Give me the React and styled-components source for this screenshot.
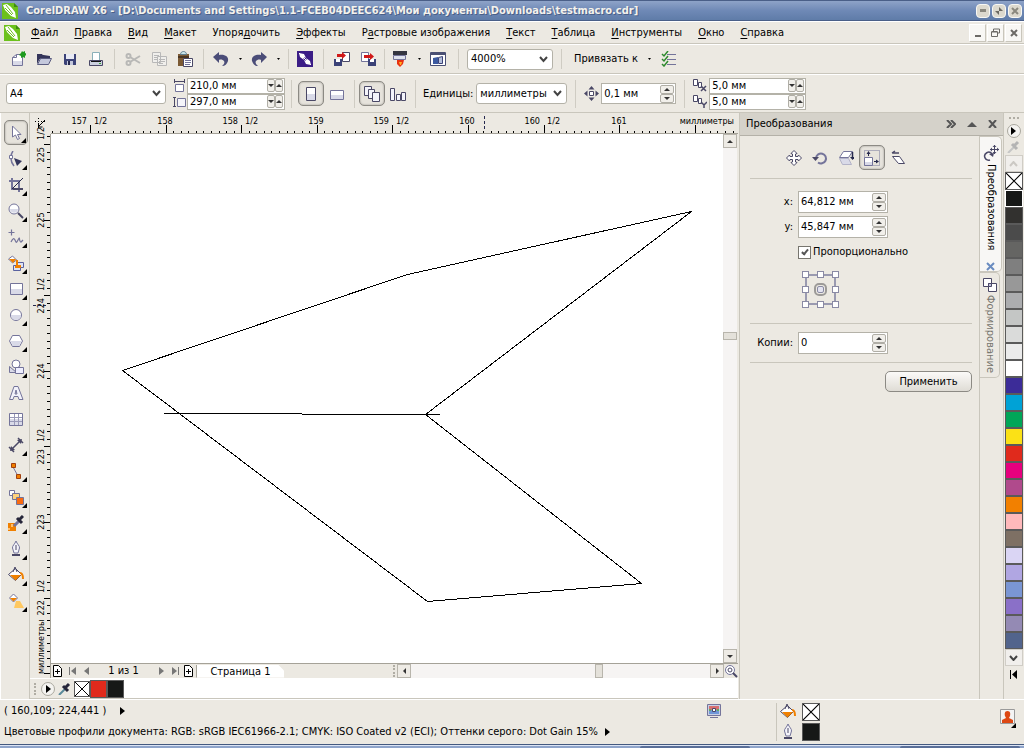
import React from "react";
import styled, { createGlobalStyle, css } from "styled-components";

const face = "#ece9e2";
const edge = "#c9c6bc";
const ink = "#4a4866";
const shade = "#d9dae8";
const mid = "#74749a";
const orange = "#f08000";

const Global = createGlobalStyle`
  *, *::before, *::after { box-sizing: border-box; }
  body { margin: 0; }
  body, button, input, select {
    font-family: "DejaVu Sans Condensed", "DejaVu Sans", sans-serif;
    font-size: 11px;
    line-height: 14px;
    color: #000;
  }
  button { padding: 0; border: 0; background: none; }
  svg { display: block; flex: none; }
`;

/* ---------- drawings ---------- */

const art = {
  corel: (
    <>
      <path fill="#6cc11c" d="M0 0h12l4 4v12H0z" />
      <path fill="#fff" d="M1 2l4-1 4 3 4 5 1 6-5-2-6-6z" />
      <path stroke="#6cc11c" fill="none" d="M4 2l7 9M3 5l7 7" />
      <path fill="#3f8a10" d="M12 0l4 4h-4z" />
    </>
  ),
  create: (
    <>
      <path fill="#fff" stroke={mid} d="M2.500 6.500l4-3h6v11h-10z" />
      <path fill={shade} d="M3 10h9v4H3z" />
      <path fill="none" stroke={mid} d="M6.500 3.500v3h-4" />
      <path fill="#1e9a1e" d="M11 2l1-2 1 1 2-1v2l2 1-2 2v2l-2-1-2 1v-2l-2-1z" />
    </>
  ),
  open: (
    <>
      <path fill="#34355a" d="M1 3h5l1 2h6v3H1z" />
      <path fill="#34355a" d="M1 3v10l3-6h10V5" />
      <path fill="#c4c8dc" stroke="#5a5c80" d="M4.500 7.500h11l-3 6h-11z" />
    </>
  ),
  save: (
    <>
      <path fill="#3c4378" d="M2 3h12v11H3l-1-1z" />
      <path fill="#e8eaf4" d="M4 3h8v5H4z" />
      <path fill="#c4c8dc" d="M5 10h6v4H5z" />
      <path fill="#26294e" d="M6 10h2v4H6z" />
    </>
  ),
  print: (
    <>
      <path fill="#fff" stroke="#8ab0b8" d="M4.500 1.500h7v8h-7z" />
      <path fill="#ccd0de" stroke={ink} d="M1.500 9.500h13v5h-13z" />
      <path fill="#111" d="M3 10h10v1H3z" />
      <path fill="#38a838" d="M11 12h2v1h-2z" />
    </>
  ),
  cut: (
    <g fill="none" stroke="#b8b8b6" strokeWidth="2">
      <circle cx="3.500" cy="5" r="2" />
      <circle cx="3.500" cy="12" r="2" />
      <path d="M5 6l10 6M5 11l10-6" />
    </g>
  ),
  copy: (
    <g fill="#f0efec" stroke="#b8b8b8">
      <path d="M1.500 1.500h8v10h-8zM6.500 5.500h9v9h-9z" />
      <path d="M8 8.500h6M8 10.500h6M8 12.500h4M3 4.500h5M3 6.500h3M3 8.500h3" />
    </g>
  ),
  paste: (
    <>
      <path fill="#7b5a34" d="M1 3h11v12H1z" />
      <path fill="#4a3520" d="M1 5h11v2H1z" />
      <path fill="#c8e4e8" stroke="#5e7c8c" d="M3.500 3.500c0-4 6-4 6 0z" />
      <path fill="#fff" stroke={ink} d="M6.500 7.500h9v8h-9z" />
      <path stroke={mid} d="M8 9.500h6M8 11.500h6M8 13.500h5" />
    </>
  ),
  undo: (
    <path fill="#4b4d78" d="M0 6l6-5v3c5-1 10 1 9 6-1 3-3 5-6 5 2-2 3-3 2-5-1-1-3-2-5-1v3z" />
  ),
  redo: (
    <path fill="#4b4d78" d="M16 6l-6-5v3C5 3 0 5 1 10c1 3 3 5 6 5-2-2-3-3-2-5 1-1 3-2 5-1v3z" />
  ),
  swap: (
    <>
      <path fill="#3b1d86" d="M0 0h16v16H0z" />
      <path fill="#fff" d="M2 2l5 1 2 4-3-1 1 3-4-3zM14 14l-5-1-2-4 3 1-1-3 4 3z" />
      <path stroke="#fff" d="M2 2l12 12" />
    </>
  ),
  importArt: (
    <>
      <path fill="#fff" stroke={ink} d="M8.500 1.500h7v9h-7z" />
      <path fill="#3c4378" d="M0 8h8v7H0z" />
      <path fill="#fff" d="M2 8h4v3H2z" />
      <path fill="#d01818" d="M3 3h5V1l4 3.500L8 8V6H3z" />
    </>
  ),
  exportArt: (
    <>
      <path fill="#fff" stroke={mid} d="M1.500 1.500h7v9h-7z" />
      <path fill="#3c4378" d="M8 8h8v7H8z" />
      <path fill="#fff" d="M10 8h4v3h-4z" />
      <path fill="#d01818" d="M4 4h6V2l4 3.500L10 9V7H4z" />
    </>
  ),
  launch: (
    <>
      <path fill="#34353f" d="M1 0h14v4H1z" />
      <path fill="#dfe2ec" stroke={mid} d="M1.500 4.500h12v4h-12z" />
      <path fill="#e83010" d="M5 9h7l-1 4-3 3-3-3z" />
      <path fill="#ffb020" d="M7 11h3l-1 3H8z" />
    </>
  ),
  welcome: (
    <>
      <path fill="#fff" stroke="#4a5074" d="M.5 1.500h15v13H.5z" />
      <path fill="#4a5074" d="M1 1h14v3H1z" />
      <path fill="#3c5aa0" d="M3 7l5-1v7H3z" />
      <path fill="#b4c0dc" stroke="#3c4378" d="M8.500 6.500l4-1v7h-4z" />
    </>
  ),
  options: (
    <>
      <path stroke={mid} d="M6 3.500h9M6 8.500h9M6 13.500h9" />
      <path fill="none" stroke="#2e8a2e" strokeWidth="1.500" d="M1 3l2 2 4-5M1 8l2 2 4-5M1 13l2 2 4-5" />
    </>
  ),
  pageWidth: (
    <>
      <path fill="#fff" stroke={mid} d="M3.500 5.500h8v7h-8z" />
      <path stroke={ink} fill="none" d="M2.500 0v4M12.500 0v4M3 2.500h9" />
    </>
  ),
  pageHeight: (
    <>
      <path fill="#f5f5fa" stroke={mid} d="M5.500 3.500h8v8h-8z" />
      <path stroke={ink} fill="none" d="M1 2.500h3M1 11.500h3M2.500 3v9" />
    </>
  ),
  portrait: (
    <>
      <path fill="#fff" stroke={ink} d="M3.500 1.500h9v13h-9z" />
      <path fill={shade} d="M4 8h8v6H4z" />
    </>
  ),
  landscape: (
    <>
      <path fill="#fff" stroke={mid} d="M1.500 4.500h13v9h-13z" />
      <path fill={shade} d="M2 9h12v4H2z" />
    </>
  ),
  allPages: (
    <g fill="#f4f4fb" stroke={ink}>
      <path d="M.5.5h7v9h-7z" />
      <path d="M4.500 3.500h6v9h-6z" />
      <path d="M8.500 6.500h7v9h-7z" />
    </g>
  ),
  onePage: (
    <g fill="#f4f4fb" stroke={ink}>
      <path d="M.5 2.500h4v12h-4zM6.500 8.500h4v6h-4zM11.500 6.500h4v8h-4z" />
    </g>
  ),
  nudge: (
    <>
      <path fill="#fff" stroke={ink} d="M5.500 5.500h4v4h-4z" />
      <path fill={ink} d="M7.500 0l3 3.500h-6zM7.500 15l3-3.500h-6zM0 7.500l3.500-3v6zM15 7.500l-3.500-3v6z" />
    </>
  ),
  dupX: (
    <>
      <path fill="#fff" stroke={ink} d="M.5.5h4v6h-4zM5.500 3.500h3v5h-3z" />
      <path stroke={ink} strokeWidth="1.500" fill="none" d="M8 7l5 5M13 7l-5 5" />
    </>
  ),
  dupY: (
    <>
      <path fill="#fff" stroke={ink} d="M.5.5h4v6h-4zM5.500 3.500h3v5h-3z" />
      <path stroke={ink} strokeWidth="1.500" fill="none" d="M8 7l3 3 3-3M11 10v3" />
    </>
  ),
  pick: <path fill="#fff" stroke={mid} d="M4.500 1v11l3-2 2 4.500 2-1-2-4h3.500z" />,
  node: (
    <>
      <path fill="none" stroke={mid} strokeWidth="1.500" d="M5 0C2 4 2 10 6 15" />
      <path fill="#fff" stroke={mid} d="M1.500 4.500h3v3h-3z" />
      <path fill="#33365c" d="M6 7l8 3-5 5z" />
    </>
  ),
  crop: (
    <>
      <path stroke={mid} strokeWidth="2" fill="none" d="M4 1v11h11M1 4h10v11" />
      <path stroke="#26294e" d="M4 12L15 1" />
      <path stroke={ink} strokeWidth="2" d="M5 12h10" />
    </>
  ),
  zoomTool: (
    <>
      <circle cx="6" cy="6" r="5" fill="#fff" stroke={mid} />
      <path fill={shade} d="M2 6h8c0 5-8 5-8 0z" />
      <path stroke={ink} strokeWidth="2" d="M10 10l5 5" />
    </>
  ),
  freehand: (
    <path fill="none" stroke={mid} strokeWidth="1.200" d="M.5 3.500h6M3.500.5v6M3 13c2-4 3-4 4-2s1 4 3 0 1-1 2 1 1 1 3-1" />
  ),
  smartFill: (
    <>
      <path fill="#fff" stroke={mid} d="M4.500 1l4 4-4 3-4-4z" />
      <path fill={orange} d="M1 4h7l-3 4z" />
      <path fill="#dde3f4" stroke="#5a62a0" d="M8.500 7.500h7v5h-7zM5.500 10.500h7v5h-7z" />
      <path fill={orange} d="M8 5h2v5h3v3H7v-2h1z" />
    </>
  ),
  rect: (
    <>
      <path fill="#fff" stroke={mid} d="M2.500 2.500h12v11h-12z" />
      <path fill={shade} d="M3 8h11v5H3z" />
    </>
  ),
  ellipse: (
    <>
      <circle cx="8" cy="8" r="5.500" fill="#fff" stroke={mid} />
      <path fill={shade} d="M3 8h10c0 6.500-10 6.500-10 0z" />
    </>
  ),
  polygon: (
    <>
      <path fill="#fff" stroke={mid} d="M1.500 8l3-5.500h7l3 5.500-3 5.500h-7z" />
      <path fill={shade} d="M2.500 8h11l-2.500 5H5z" />
    </>
  ),
  shapes: (
    <>
      <circle cx="8" cy="5" r="4" fill="#fff" stroke={mid} />
      <path fill={shade} stroke={mid} d="M1.500 7.500l7 6h-7z" />
      <path fill="#eef" stroke={mid} d="M7.500 8.500h8v6h-8z" />
    </>
  ),
  letter: (
    <path fill="#f2f2fa" stroke={mid} fillRule="evenodd" d="M6 1.500h4l5 13h-4l-1-3H6l-1 3H1.500zM8 5l-1 4h2z" />
  ),
  grid: (
    <>
      <path fill="#fff" stroke={mid} d="M1.500 2.500h13v12h-13z" />
      <path fill={shade} d="M2 8h12v6H2z" />
      <path stroke="#9a9ab8" d="M2 6.500h12M2 10.500h12M6.500 3v11M10.500 3v11" />
    </>
  ),
  dimension: (
    <>
      <path stroke={ink} strokeWidth="1.500" d="M3 13L13 3M1 10l5 5M10 1l5 5" />
      <path fill={ink} d="M3 9l4 4-5 1zM13 7L9 3l5-1z" />
    </>
  ),
  connector: (
    <>
      <path stroke={mid} d="M5 4l5 9" />
      <path fill={orange} stroke="#a04010" d="M3.500.5h4v4h-4zM8.500 11.500h4v4h-4z" />
    </>
  ),
  blend: (
    <>
      <path fill="#fff" stroke={mid} d="M1.500 1.500h5v5h-5z" />
      <path fill="#ffd27a" stroke={mid} d="M4.500 4.500h7v6h-7z" />
      <path fill="#f86a10" stroke={mid} d="M8.500 8.500h7v7h-7z" />
    </>
  ),
  eyedropTool: (
    <>
      <path fill={orange} d="M0 8h8v8H0z" />
      <path fill="#ffc070" d="M3 9h2v3H3zM0 13h2v2H0z" />
      <path stroke={mid} strokeWidth="3" d="M6 11l5-5" />
      <path stroke="#26263a" strokeWidth="3" d="M9 3l5 5M11 5l4-4" />
    </>
  ),
  pen: (
    <>
      <path fill="#f4f4fa" stroke={mid} d="M8 0c1 3 4 5 3.500 7L10 12H6L4.500 7C4 5 7 3 8 0z" />
      <path stroke={ink} d="M8 4v5" />
      <path fill={ink} d="M4 13h8v2H4z" />
    </>
  ),
  bucket: (
    <>
      <path fill="#fff" stroke={ink} d="M7.500 1.500l6 6-6 6-7-6z" />
      <path fill={orange} d="M2 8h11l-5.500 5.500z" />
      <path fill="none" stroke={ink} d="M5 5l2-5 2 5" />
      <path fill="none" stroke={orange} strokeWidth="2" d="M12 6c2 0 3 1 3 6" />
    </>
  ),
  interactive: (
    <>
      <path fill="#fff" stroke={mid} d="M5.500 1l4 4-4 4-4-4z" />
      <path fill={orange} d="M2 5h7L5.500 8.500z" />
      <path fill="#ffc860" d="M8 8h4l4 7H6z" />
    </>
  ),
  eyedrop: (
    <>
      <path stroke="#5a8a9a" strokeWidth="2" d="M1 13l6-6" />
      <path stroke="#26263a" strokeWidth="3" d="M5 4l5 5M7 6l4-4" />
    </>
  ),
  eyedropOff: (
    <>
      <path stroke="#c6c6c6" strokeWidth="2" d="M1 13l6-6" />
      <path stroke="#b4b4b4" strokeWidth="3" d="M5 4l5 5M7 6l4-4" />
    </>
  ),
  move: (
    <path fill="#fff" stroke={ink} d="M8 .5l3 3-1.500.5v2.500H12l.5-1.500 3 3-3 3-.5-1.500H9.500V12l1.500.5-3 3-3-3 1.500-.5V9.500H4L3.500 11l-3-3 3-3L4 6.500h2.500V4L5 3.500z" />
  ),
  rotate: (
    <>
      <path fill="none" stroke={mid} strokeWidth="2" d="M4 8a5 5 0 1 1 2 4.500" />
      <path fill={ink} d="M0 7h7l-3.500 4z" />
    </>
  ),
  mirror: (
    <>
      <path fill="#fff" stroke={mid} d="M5.500 1.500h9l-4 6h-9z" />
      <path fill={shade} stroke="#b4b4c8" d="M1.500 8.500h9l3 6h-9z" />
      <path stroke="#26294e" strokeWidth="1.500" d="M14.500 2v6" />
      <path fill="#26294e" d="M12 7h5l-2.500 3z" />
    </>
  ),
  scale: (
    <>
      <path fill="none" stroke={mid} strokeDasharray="1 1" d="M.5.5h15v15H.5z" />
      <path fill="#fff" stroke={mid} d="M.5 7.500h8v8h-8z" />
      <path fill={shade} d="M1 12h7v3H1z" />
      <path fill="#26294e" d="M4.500 1l2 3h-4zM15 11.500l-3-2v4z" />
      <path stroke="#26294e" d="M10 11.500h3M4.500 3v3" />
    </>
  ),
  skew: (
    <>
      <path fill="#fff" stroke={ink} d="M2.500 6.500h7l5 7h-6z" />
      <path stroke={ink} strokeWidth="1.500" d="M2 3h7M2 3l3-2" />
    </>
  ),
  tabMove: (
    <>
      <path fill="none" stroke={ink} strokeWidth="1.500" d="M8 15a4 4 0 1 1 2-6" />
      <path fill={ink} d="M7 9l5-1-1 4z" />
      <path stroke={ink} d="M12.500 0v9M8 4.500h9" />
      <path fill={ink} d="M12.500 0l2 2h-4zM12.500 9l2-2h-4zM8 4.500l2-2v4zM17 4.500l-2-2v4z" />
    </>
  ),
  tabShape: (
    <g fill="#fff" stroke={ink}>
      <path d="M1.500 1.500h8v8h-8z" />
      <path d="M6.500 6.500h8v8h-8z" />
      <path fill="#c0c2dc" d="M6.500 6.500h3v3h-3z" />
    </g>
  ),
  proof: (
    <>
      <path fill="#c8d0e4" stroke={mid} d="M1.500 1.500h13v11h-13z" />
      <path fill="#d87070" d="M3 3h10v4H3z" />
      <path fill="#6f96d8" d="M3 7h10v4H3z" />
      <path fill="#5fae5f" d="M3 6h2v2H3zM11 6h2v2h-2z" />
      <path fill="#fff" stroke={ink} d="M6.500 5.500h3v3h-3z" />
      <path fill={mid} d="M4 14h8v1H4z" />
    </>
  ),
  user: (
    <>
      <path fill="#f4f4f4" stroke="#9a9a9a" d="M.5.500h14v14H.5z" />
      <path fill="#dd4814" d="M7.500 2c3 0 3 3 2.500 5l-1 2 4 2v3H2v-3l4-2-1-2c-.5-2-.5-5 2.500-5z" />
    </>
  ),
  lens: (
    <>
      <circle cx="5" cy="5" r="4.500" fill="#fff" stroke={mid} />
      <circle cx="5" cy="5" r="2" fill="none" stroke={ink} />
      <path stroke={ink} strokeWidth="2" d="M8 8l4 4" />
    </>
  ),
  addPage: (
    <>
      <path fill="#fff" stroke="#000" d="M1.500.5h5l3 3v8h-8z" />
      <path stroke="#000" d="M3 6.500h5M5.500 4v5" />
    </>
  ),
  origin: (
    <>
      <path stroke="#000" strokeDasharray="1 2" d="M3.500 0v12M0 3.500h12" />
      <path stroke="#000" d="M10 2L4 8M3.500 5v4h4" fill="none" />
    </>
  ),
};

const Art = ({ name, size = 16 }) => (
  <svg width={size} height={size} viewBox={`0 0 ${size} ${size}`} aria-hidden="true">
    {art[name]}
  </svg>
);

const Shape = ({ w, h, d, fill = "#000", stroke = "none", sw = 1 }) => (
  <svg width={w} height={h} viewBox={`0 0 ${w} ${h}`} aria-hidden="true">
    <path d={d} fill={fill} stroke={stroke} strokeWidth={sw} />
  </svg>
);

/* ---------- frame ---------- */

const Window = styled.div`
  min-height: 100vh;
  display: flex;
  flex-direction: column;
  background: ${face};
`;

const TitleBar = styled.header`
  display: flex;
  align-items: center;
  gap: 8px;
  height: 21px;
  padding: 0 2px;
  border-top: 1px solid #4a5f88;
  border-bottom: 1px solid #4a5f88;
  background: linear-gradient(#8ea3c8, #6f89b6 50%, #5f7ca8);
`;

const Title = styled.h1`
  flex: 1;
  margin: 0;
  font-size: 11px;
  line-height: 14px;
  font-weight: bold;
  white-space: nowrap;
  color: #f4f2ec;
  text-shadow: 1px 1px 0 #4a5f88;
`;

const Group = styled.div`
  display: flex;
  align-items: center;
  gap: ${(p) => p.$gap || 0}px;
`;

const CaptionButton = styled.button`
  display: grid;
  place-items: center;
  width: 14px;
  height: 14px;
  border: 1px solid #f8f8f4;
  border-radius: 4px;
  background: #dcd9ce;
`;

const MenuBar = styled.nav`
  display: flex;
  align-items: center;
  gap: 16px;
  height: 23px;
  padding: 0 2px 0 4px;
  border-top: 1px solid #fff;
  border-bottom: 1px solid ${edge};
`;

const MenuItem = styled.button`
  line-height: 18px;
  white-space: nowrap;
  u { text-underline-offset: 2px; }
`;

const MenuIcon = styled.span`
  width: 11px;
`;

const Spring = styled.span`
  flex: 1;
`;

const ChildButton = styled.button`
  display: grid;
  place-items: center;
  width: 17px;
  height: 18px;
  border: 1px solid #fff;
  border-right-color: ${edge};
  border-bottom-color: ${edge};
  background: #f8f7f4;
`;

const Toolbar = styled.div`
  display: flex;
  align-items: center;
  height: 30px;
  padding: 0 5px;
  border-top: 1px solid #fff;
  border-bottom: 1px solid ${edge};
`;

const PropertyBar = styled(Toolbar)`
  height: 39px;
  padding: 0 6px;
`;

const Divider = styled.span`
  flex: none;
  width: 1px;
  height: ${(p) => p.$h || 20}px;
  margin: 0 ${(p) => p.$gap || 5}px;
  background: #cfccc3;
`;

const IconButton = styled.button`
  flex: none;
  display: grid;
  place-items: center;
  width: ${(p) => p.$w || 26}px;
  height: 25px;
  ${(p) =>
    p.$pressed &&
    css`
      border: 1px solid #8c8a84;
      border-radius: 5px;
      background: #e6e3dc;
      box-shadow: inset 0 0 2px #8c8a84;
    `}
`;

const SelectBox = styled.span`
  position: relative;
  display: flex;
  width: ${(p) => p.$w}px;
  height: 21px;
  select {
    appearance: none;
    width: 100%;
    padding: 0 4px 0 3px;
    border: 1px solid #b4b2a8;
    border-radius: 3px;
    background: #fff;
  }
  svg {
    position: absolute;
    right: 5px;
    top: 7px;
    pointer-events: none;
  }
`;

const Combo = ({ label, value, w, options }) => (
  <SelectBox $w={w}>
    <select aria-label={label} defaultValue={value}>
      {[value, ...options].map((o) => (
        <option key={o}>{o}</option>
      ))}
    </select>
    <Shape w={9} h={7} d="M1 1l3.500 4L8 1" fill="none" stroke="#444" sw={2} />
  </SelectBox>
);

const FieldBox = styled.span`
  display: flex;
  align-items: center;
  width: ${(p) => p.$w}px;
  height: ${(p) => p.$h}px;
  padding-right: 1px;
  border: 1px solid #b4b2a8;
  background: #fff;
  input {
    flex: 1;
    min-width: 0;
    height: 14px;
    padding: 0 0 0 2px;
    border: 0;
    outline: 0;
    background: none;
  }
`;

const Steps = styled.span`
  display: flex;
  flex-direction: ${(p) => (p.$row ? "row" : "column")};
`;

const Step = styled.button`
  display: grid;
  place-items: center;
  width: ${(p) => (p.$row ? 8 : 14)}px;
  height: ${(p) => (p.$row ? 13 : 9)}px;
  border: 1px solid #b0aea6;
  border-radius: 2px;
  background: #f1efea;
`;

const Up = () => <Shape w={6} h={3} d="M0 3l3-3 3 3z" fill="#333" />;
const Down = () => <Shape w={6} h={3} d="M0 0l3 3 3-3z" fill="#333" />;

const Spin = ({ id, label, value, w, h = 16, row }) => (
  <FieldBox $w={w} $h={h}>
    <input id={id} aria-label={label} defaultValue={value} />
    <Steps $row={row}>
      {row ? (
        <>
          <Step $row aria-label="Меньше"><Down /></Step>
          <Step $row aria-label="Больше"><Up /></Step>
        </>
      ) : (
        <>
          <Step aria-label="Больше"><Up /></Step>
          <Step aria-label="Меньше"><Down /></Step>
        </>
      )}
    </Steps>
  </FieldBox>
);

const Pairs = styled.div`
  display: grid;
  grid-template-columns: 15px auto;
  align-items: center;
  column-gap: ${(p) => p.$gap || 0}px;
  margin-left: ${(p) => p.$lead || 0}px;
`;

const Caption = styled.label`
  white-space: nowrap;
  padding: 0 ${(p) => p.$pad || 4}px;
`;

/* ---------- work area ---------- */

const Work = styled.div`
  flex: 1;
  display: flex;
  min-height: 586px;
`;

const Toolbox = styled.aside`
  display: flex;
  flex-direction: column;
  gap: 1px;
  width: 30px;
  padding: 7px 2px 0 3px;
  border-left: 1px solid #fff;
  border-right: 1px solid ${edge};
`;

const Tool = styled(IconButton)`
  position: relative;
  width: 24px;
  ${(p) =>
    p.$flyout &&
    css`
      &::after {
        content: "";
        position: absolute;
        right: 1px;
        bottom: 1px;
        border-left: 5px solid transparent;
        border-bottom: 5px solid #000;
      }
    `}
`;

const Document = styled.main`
  flex: 1;
  min-width: 0;
  display: flex;
  flex-direction: column;
`;

const Sheet = styled.div`
  flex: 1;
  display: grid;
  grid-template-columns: 21px 1fr;
  grid-template-rows: 21px 1fr 15px;
`;

const Corner = styled.div`
  grid-area: 1 / 1;
  display: grid;
  place-items: center;
`;

const RulerBox = styled.div`
  position: relative;
  grid-area: ${(p) => (p.$vertical ? "2 / 1 / 4 / 2" : "1 / 2")};
  clip-path: ${(p) => (p.$vertical ? "inset(-10px 0 0 0)" : "inset(0)")};
  ${(p) => (p.$vertical ? "border-right" : "border-bottom")}: 1px solid #a5a298;
  > svg {
    position: absolute;
    inset: 0;
    width: 100%;
    height: 100%;
    overflow: visible;
  }
  text {
    font-size: 9px;
  }
`;

const View = styled.div`
  grid-area: 2 / 2;
  display: flex;
  min-width: 0;
`;

const Canvas = styled.div`
  flex: 1;
  min-width: 0;
  overflow: hidden;
  background: #fff;
`;

const Track = styled.div`
  display: flex;
  flex-direction: ${(p) => (p.$vertical ? "column" : "row")};
  align-items: stretch;
  justify-content: space-between;
  ${(p) => (p.$vertical ? "width: 14px; margin-right: 1px;" : "flex: 1; height: 14px;")}
  background: #f6f4f3;
`;

const TrackButton = styled.button`
  display: grid;
  place-items: center;
  width: 14px;
  height: 14px;
  border: 1px solid #b8b5ac;
  background: #eeebe5;
`;

const Thumb = styled.span`
  width: ${(p) => (p.$vertical ? 14 : 8)}px;
  height: ${(p) => (p.$vertical ? 8 : 14)}px;
  ${(p) => (p.$vertical ? "margin-bottom: 126px" : "margin-left: 76px")};
  border: 1px solid #b8b5ac;
  background: #e4e1da;
`;

const Pager = styled.div`
  grid-area: 3 / 2;
  display: flex;
  border-top: 1px solid #a5a298;
`;

const PageNav = styled.div`
  display: flex;
  align-items: center;
  width: 346px;
`;

const NavButton = styled.button`
  display: grid;
  place-items: center;
  width: 14px;
  height: 14px;
`;

const PageCount = styled.span`
  width: 61px;
  text-align: center;
`;

const PageTab = styled.button`
  width: 88px;
  height: 13px;
  line-height: 13px;
  border-left: 1px solid #a5a298;
  background: #fff;
  clip-path: polygon(0 0, 82px 0, 100% 6px, 100% 100%, 0 100%);
`;

const Grip = styled.span`
  width: 2px;
  height: 12px;
  margin-right: 2px;
  border-left: 2px dotted #b0ada4;
`;

const DocPalette = styled.div`
  display: flex;
  align-items: center;
  height: 21px;
  border-top: 1px solid #fff;
  border-bottom: 1px solid ${edge};
  background: #fff;
`;

const PaletteTools = styled.div`
  display: flex;
  align-items: center;
  gap: 3px;
  width: 44px;
  height: 19px;
  padding-left: 4px;
  background: ${face};
`;

const RoundButton = styled.button`
  display: grid;
  place-items: center;
  width: 14px;
  height: 14px;
  border: 1px solid #aaa89f;
  border-radius: 50%;
  background: #f4f3f0;
`;

const Swatch = styled.button`
  display: block;
  flex: none;
  width: ${(p) => p.$w || 17}px;
  height: ${(p) => p.$h || 17}px;
  border: 1px solid ${(p) => (p.$selected ? "#fff" : "#5a5a5a")};
  background: ${(p) => p.$color || "#fff"};
  svg { width: 100%; height: 100%; }
`;

const Cross = () => (
  <svg viewBox="0 0 14 14" preserveAspectRatio="none" aria-hidden="true">
    <path d="M0 0l14 14M14 0L0 14" stroke="#000" />
  </svg>
);

/* ---------- docker ---------- */

const Docker = styled.aside`
  display: flex;
  flex-direction: column;
  width: 265px;
  margin-left: 1px;
  border: solid ${edge};
  border-width: 0 1px;
`;

const DockerHead = styled.header`
  display: flex;
  align-items: center;
  gap: 11px;
  height: 23px;
  padding: 0 6px;
  border-bottom: 1px solid #b4b1a8;
  background: #d5d2ca;
  h2 {
    flex: 1;
    margin: 0;
    font-size: 11px;
    font-weight: normal;
  }
`;

const DockerBody = styled.div`
  flex: 1;
  display: flex;
`;

const Panel = styled.form`
  flex: 1;
  padding: 9px 7px 0 10px;
`;

const Modes = styled.div`
  display: flex;
  justify-content: center;
  padding-right: 31px;
  padding-bottom: 8px;
  margin-bottom: 12px;
  border-bottom: 1px solid ${edge};
`;

const FormRow = styled.div`
  display: grid;
  grid-template-columns: 43px auto;
  column-gap: 5px;
  align-items: center;
  justify-content: start;
  height: 22px;
  margin-bottom: ${(p) => p.$gap || 3}px;
  > label:first-child { text-align: right; }
`;

const CheckLabel = styled.label`
  grid-column: 2;
  display: flex;
  align-items: center;
  gap: 2px;
  input {
    appearance: none;
    position: relative;
    width: 13px;
    height: 13px;
    margin: 0;
    border: 1px solid #77756e;
    background: #fff;
  }
  input:checked::after {
    content: "";
    position: absolute;
    left: 4px;
    top: 1px;
    width: 4px;
    height: 7px;
    border: solid #555;
    border-width: 0 2px 2px 0;
    transform: rotate(40deg);
  }
`;

const Anchors = styled.fieldset`
  position: relative;
  display: grid;
  grid-template-columns: repeat(3, 7px);
  gap: 8px;
  width: 37px;
  margin: 8px 0 15px 52px;
  padding: 0;
  border: 0;
  &::before {
    content: "";
    position: absolute;
    inset: 3px;
    border: 2px solid #9a9ab0;
  }
  input {
    appearance: none;
    position: relative;
    width: 7px;
    height: 7px;
    margin: 0;
    border: 1px solid #8a8aa4;
    background: #fff;
  }
  input:checked {
    outline: 2px solid #9c9a98;
    outline-offset: 1px;
    border-radius: 2px;
    background: #e4e4f0;
  }
`;

const Rule = styled.hr`
  height: 1px;
  margin: 0 0 8px;
  border: 0;
  background: ${edge};
`;

const Apply = styled.button`
  display: block;
  width: 87px;
  height: 21px;
  margin-left: auto;
  border: 1px solid #8c8a84;
  border-radius: 5px;
  background: linear-gradient(#fbfaf8, #dfdcd5);
`;

const Tabs = styled.div`
  width: 24px;
  border-left: 1px solid ${edge};
`;

const Tab = styled.button`
  display: flex;
  flex-direction: column;
  align-items: center;
  gap: 2px;
  width: ${(p) => (p.$active ? 22 : 20)}px;
  height: ${(p) => (p.$active ? 136 : 106)}px;
  padding-top: ${(p) => (p.$active ? 8 : 4)}px;
  border: 1px solid ${edge};
  border-left: 0;
  border-radius: 0 5px 5px 0;
  background: ${(p) => (p.$active ? "#f8f7f5" : face)};
  color: ${(p) => (p.$active ? "#000" : "#77756e")};
  span {
    writing-mode: vertical-rl;
    flex: 1;
    text-align: left;
    line-height: 14px;
  }
`;

const Palette = styled.aside`
  display: flex;
  flex-direction: column;
  align-items: center;
  width: 20px;
  padding: 4px 1px 0 0;
`;

const Dots = styled.span`
  width: 10px;
  height: 7px;
  border-top: 2px dotted #b0ada4;
`;

const PaletteButton = styled.button`
  display: grid;
  place-items: center;
  width: 18px;
  height: 17px;
  border: ${(p) => (p.$plain ? 0 : 1)}px solid #d0cdc6;
  background: ${(p) => (p.$plain ? "none" : "#f1efec")};
`;

/* ---------- status ---------- */

const Status = styled.footer`
  display: grid;
  grid-template-columns: 1fr 74px 221px 27px;
  align-items: center;
  height: 45px;
  border-top: 1px solid #fff;
`;

const StatusText = styled.div`
  display: grid;
  grid-template-rows: 21px 21px;
  align-items: center;
  margin-bottom: 2px;
  padding-left: 4px;
  white-space: nowrap;
`;

const Fill = styled.div`
  display: grid;
  grid-template-columns: 16px 18px;
  gap: 2px 6px;
  align-items: center;
  justify-items: center;
  justify-content: start;
  padding-left: 3px;
  border-left: 1px solid ${edge};
`;

const UserButton = styled(Tool)`
  width: 20px;
  margin-top: -12px;
`;

const Taskbar = styled.div`
  display: grid;
  grid-template-columns: 640fr 110fr 150fr 120fr 4fr;
  height: 4px;
  border-top: 1px solid #44597f;
  background: linear-gradient(#dce4f4 1px, #8fa4ca 1px);
  span:nth-child(even) {
    margin-top: 1px;
    border-radius: 4px 4px 0 0;
    background: #5a6f98;
  }
`;

/* ---------- rulers ---------- */

const PITCH = 75.6;
const ticks = (start, count) =>
  Array.from({ length: count }, (_, i) => {
    const n = i - 10;
    return { at: Math.round(start + (n * PITCH) / 10) + 0.5, major: n % 10 === 0 };
  }).filter((t) => t.at > 0);

const hLabels = [
  [114, "158"], [265, "159"], [416, "160"], [568, "161"],
];
const hHalves = [[39, "157"], [190, "158"], [341, "159"], [492, "160"]];
const vLabels = [[86, "225"], [237, "224"], [388, "223"]];
const vHalves = [[10, "225"], [161, "224"], [312, "223"], [463, "222"]];

const HRuler = () => (
  <RulerBox>
    <svg aria-label="Горизонтальная линейка">
      <path
        stroke="#000"
        d={ticks(39, 260).map((t) => `M${t.at} ${t.major ? 12 : 18}V20`).join("")}
      />
      <path stroke="#26294e" strokeDasharray="3 2" d="M433.500 3v15" />
      {hLabels.map(([x, s]) => (
        <text key={s} x={x} y="11" textAnchor="middle">{s}</text>
      ))}
      {hHalves.map(([x, s]) => (
        <g key={s}>
          <text x={x - 3} y="11" textAnchor="end">{s}</text>
          <text x={x + 4} y="11">1/2</text>
        </g>
      ))}
      <text x="100%" dx="-4" y="11" textAnchor="end">миллиметры</text>
    </svg>
  </RulerBox>
);

const VRuler = () => (
  <RulerBox $vertical>
    <svg aria-label="Вертикальная линейка">
      <path
        stroke="#000"
        d={ticks(10, 200).map((t) => `M${t.major ? 14 : 17} ${t.at}H20`).join("")}
      />
      <path stroke="#26294e" strokeDasharray="3 2" d="M3 171.500h15" />
      {vLabels.map(([y, s]) => (
        <text key={s} transform={`translate(14 ${y}) rotate(-90)`} textAnchor="middle">{s}</text>
      ))}
      {vHalves.map(([y, s]) => (
        <g key={s} transform={`translate(14 ${y}) rotate(-90)`}>
          <text x="-3" textAnchor="end">{s}</text>
          <text x="4">1/2</text>
        </g>
      ))}
      <svg y="100%" overflow="visible">
        <text transform="translate(14 -4) rotate(-90)">миллиметры</text>
      </svg>
    </svg>
  </RulerBox>
);

/* ---------- data ---------- */

const menus = [
  ["", "Ф", "айл"], ["", "П", "равка"], ["", "В", "ид"], ["", "М", "акет"],
  ["Упоря", "д", "очить"], ["", "Э", "ффекты"], ["Р", "а", "стровые изображения"],
  ["", "Т", "екст"], ["", "Т", "аблица"], ["", "И", "нструменты"],
  ["", "О", "кно"], ["", "С", "правка"],
];

const tools = [
  ["pick", "Указатель", 1], ["node", "Форма", 1], ["crop", "Обрезка", 1],
  ["zoomTool", "Масштаб", 1], ["freehand", "Свободная форма", 1],
  ["smartFill", "Интеллектуальная заливка", 1], ["rect", "Прямоугольник", 1],
  ["ellipse", "Эллипс", 1], ["polygon", "Многоугольник", 1],
  ["shapes", "Основные фигуры", 1], ["letter", "Текст", 0], ["grid", "Таблица", 0],
  ["dimension", "Размер", 1], ["connector", "Соединитель", 1],
  ["blend", "Перетекание", 1], ["eyedropTool", "Пипетка", 1],
  ["pen", "Абрис", 1], ["bucket", "Заливка", 1],
  ["interactive", "Интерактивная заливка", 1],
];

const colors = [
  "#161817", "#32312f", "#4b4b4b", "#656563", "#7f7f7f", "#989898", "#acadaf",
  "#c4c6c5", "#dadbda", "#ebebeb", "#ffffff", "#3c2c98", "#00a2d6", "#00a658",
  "#fbe116", "#e02a1c", "#e6007e", "#b04a8c", "#f28000", "#ffb9bb", "#7e7064",
  "#dad5f4", "#b0a6e2", "#7a96d4", "#8a70c8", "#948ab4", "#52648c",
];

const modes = [
  ["move", "Положение"], ["rotate", "Поворот"], ["mirror", "Масштаб и отражение"],
  ["scale", "Размер"], ["skew", "Наклон"],
];

const Button = ({ name, label, ...rest }) => (
  <IconButton aria-label={label} {...rest}>
    <Art name={name} />
  </IconButton>
);

const DropDot = ({ label }) => (
  <IconButton $w={14} aria-label={label}>
    <Shape w={3} h={2} d="M0 0h3l-1.500 2z" />
  </IconButton>
);

const Play = () => <Shape w={5} h={8} d="M0 0l5 4-5 4z" />;

export default function App() {
  return (
    <>
      <Global />
      <Window>
        <TitleBar>
          <Art name="corel" />
          <Title>
            {"CorelDRAW X6 - [D:\\Documents and Settings\\1.1-FCEB04DEEC624\\Мои документы\\Downloads\\testmacro.cdr]"}
          </Title>
          <Group $gap={2}>
            <CaptionButton aria-label="Свернуть">
              <Shape w={6} h={3} d="M0 0h6v3H0z" fill="#8a887e" />
            </CaptionButton>
            <CaptionButton aria-label="Восстановить">
              <Shape w={8} h={8} d="M4 0v4h4zM4 8V4H0z" fill="#6c6a62" />
            </CaptionButton>
            <CaptionButton aria-label="Закрыть">
              <Shape w={8} h={8} d="M1 1l6 6M7 1L1 7" stroke="#8a887e" sw={2} />
            </CaptionButton>
          </Group>
        </TitleBar>

        <MenuBar>
          <MenuIcon><Art name="corel" /></MenuIcon>
          {menus.map(([a, k, b]) => (
            <MenuItem key={a + k + b}>{a}<u>{k}</u>{b}</MenuItem>
          ))}
          <Spring />
          <Group $gap={1}>
            <ChildButton aria-label="Свернуть документ">
              <Shape w={8} h={8} d="M1 6h6v2H1z" fill="#6c6a66" />
            </ChildButton>
            <ChildButton aria-label="Восстановить документ">
              <Shape w={9} h={9} d="M2.500 3V1h6v4H7M.5 4h6v4.500h-6zM.5 3.500h6" fill="none" stroke="#6c6a66" />
            </ChildButton>
            <ChildButton aria-label="Закрыть документ">
              <Shape w={8} h={8} d="M1 1l6 6M7 1L1 7" stroke="#6c6a66" sw={2} />
            </ChildButton>
          </Group>
        </MenuBar>

        <Toolbar>
          <Button name="create" label="Создать" />
          <Button name="open" label="Открыть" />
          <Button name="save" label="Сохранить" />
          <Button name="print" label="Печать" />
          <Divider />
          <Button name="cut" label="Вырезать" />
          <Button name="copy" label="Копировать" />
          <Button name="paste" label="Вставить" />
          <Divider />
          <Button name="undo" label="Отменить" $w={24} />
          <DropDot label="Список отмены" />
          <Button name="redo" label="Вернуть" $w={24} />
          <DropDot label="Список возврата" />
          <Divider $gap={3} />
          <Button name="swap" label="Поиск содержимого" />
          <Divider />
          <Button name="importArt" label="Импорт" />
          <Button name="exportArt" label="Экспорт" />
          <Divider $gap={3} />
          <Button name="launch" label="Запуск приложений" $w={24} />
          <DropDot label="Список приложений" />
          <Button name="welcome" label="Экран приветствия" $w={24} />
          <Divider $gap={8} />
          <Combo label="Масштаб" value="4000%" w={86} options={["100%", "200%"]} />
          <Divider $gap={8} />
          <Caption as="span">Привязать к</Caption>
          <DropDot label="Привязка" />
          <Button name="options" label="Параметры" />
        </Toolbar>

        <PropertyBar>
          <Combo label="Размер страницы" value="A4" w={160} options={["A3", "A5"]} />
          <Pairs $lead={6}>
            <Art name="pageWidth" size={14} />
            <Spin label="Ширина страницы" value="210,0 мм" w={98} row />
            <Art name="pageHeight" size={14} />
            <Spin label="Высота страницы" value="297,0 мм" w={98} row />
          </Pairs>
          <Divider $h={28} $gap={6} />
          <Button name="portrait" label="Книжная" $pressed />
          <Button name="landscape" label="Альбомная" />
          <Divider $h={28} $gap={4} />
          <Button name="allPages" label="Все страницы" $pressed />
          <Button name="onePage" label="Текущая страница" />
          <Divider $h={28} $gap={4} />
          <Caption as="span" $pad={3}>Единицы:</Caption>
          <Combo label="Единицы" value="миллиметры" w={91} options={["дюймы"]} />
          <Divider $h={28} $gap={8} />
          <Pairs $gap={2}>
            <Art name="nudge" size={15} />
            <Spin label="Шаг смещения" value="0,1 мм" w={75} h={21} />
          </Pairs>
          <Divider $h={28} $gap={8} />
          <Pairs $gap={1}>
            <Art name="dupX" size={14} />
            <Spin label="Сдвиг по X" value="5,0 мм" w={97} row />
            <Art name="dupY" size={14} />
            <Spin label="Сдвиг по Y" value="5,0 мм" w={97} row />
          </Pairs>
        </PropertyBar>

        <Work>
          <Toolbox>
            {tools.map(([name, label, flyout], i) => (
              <Tool key={name} aria-label={label} $flyout={flyout} $pressed={i === 0}>
                <Art name={name} />
              </Tool>
            ))}
          </Toolbox>

          <Document>
            <Sheet>
              <Corner><Art name="origin" size={12} /></Corner>
              <HRuler />
              <VRuler />
              <View>
                <Canvas>
                  <svg width="672" height="529" aria-label="Чертёж">
                    <g fill="none" stroke="#000" shapeRendering="crispEdges">
                      <path d="M71.500 236.500L356.500 140.500L640.500 77.500L374.500 280.500L590.500 449.500L376.500 467.500z" />
                      <path d="M113 279.500h138M251 280.500h138" />
                    </g>
                  </svg>
                </Canvas>
                <Track $vertical>
                  <TrackButton aria-label="Вверх"><Up /></TrackButton>
                  <Thumb $vertical />
                  <TrackButton aria-label="Вниз"><Down /></TrackButton>
                </Track>
              </View>
              <Pager>
                <PageNav>
                  <NavButton aria-label="Добавить страницу в начало"><Art name="addPage" size={12} /></NavButton>
                  <NavButton aria-label="Первая страница">
                    <Shape w={7} h={8} d="M0 0h1v8H0zM7 0v8L2 4z" fill="#777" />
                  </NavButton>
                  <NavButton aria-label="Предыдущая страница">
                    <Shape w={5} h={8} d="M5 0v8L0 4z" fill="#777" />
                  </NavButton>
                  <PageCount>1 из 1</PageCount>
                  <NavButton aria-label="Следующая страница">
                    <Shape w={5} h={8} d="M0 0v8l5-4z" fill="#777" />
                  </NavButton>
                  <NavButton aria-label="Последняя страница">
                    <Shape w={7} h={8} d="M6 0h1v8H6zM0 0v8l5-4z" fill="#777" />
                  </NavButton>
                  <NavButton aria-label="Добавить страницу в конец"><Art name="addPage" size={12} /></NavButton>
                  <PageTab>Страница 1</PageTab>
                  <Spring />
                  <Grip />
                </PageNav>
                <Track>
                  <TrackButton aria-label="Влево"><Shape w={3} h={6} d="M3 0v6L0 3z" fill="#333" /></TrackButton>
                  <Thumb />
                  <TrackButton aria-label="Вправо"><Shape w={3} h={6} d="M0 0v6l3-3z" fill="#333" /></TrackButton>
                </Track>
                <NavButton aria-label="Навигатор"><Art name="lens" size={13} /></NavButton>
              </Pager>
            </Sheet>
            <DocPalette>
              <PaletteTools>
                <Grip />
                <RoundButton aria-label="Меню палитры"><Play /></RoundButton>
                <Art name="eyedrop" size={13} />
              </PaletteTools>
              <Swatch $w={16} $h={16} aria-label="Нет цвета"><Cross /></Swatch>
              <Group>
                <Swatch $h={18} $color="#e02a1c" aria-label="Красный" />
                <Swatch $h={18} $color="#161817" aria-label="Чёрный" />
              </Group>
            </DocPalette>
          </Document>

          <Docker>
            <DockerHead>
              <h2>Преобразования</h2>
              <button aria-label="Свернуть окно">
                <Shape w={10} h={8} d="M1 0l4 4-4 4M5 0l4 4-4 4" fill="none" stroke="#555" sw={2} />
              </button>
              <button aria-label="Скрыть"><Shape w={10} h={5} d="M0 5l5-5 5 5z" fill="#555" /></button>
              <button aria-label="Закрыть окно">
                <Shape w={9} h={8} d="M1 0l7 8M8 0L1 8" stroke="#555" sw={2} />
              </button>
            </DockerHead>
            <DockerBody>
              <Panel onSubmit={(e) => e.preventDefault()}>
                <Modes>
                  {modes.map(([name, label]) => (
                    <Button key={name} type="button" name={name} label={label} $pressed={name === "scale"} />
                  ))}
                </Modes>
                <FormRow>
                  <label htmlFor="size-x">x:</label>
                  <Spin id="size-x" value="64,812 мм" w={90} h={22} />
                </FormRow>
                <FormRow>
                  <label htmlFor="size-y">y:</label>
                  <Spin id="size-y" value="45,847 мм" w={90} h={22} />
                </FormRow>
                <FormRow>
                  <CheckLabel>
                    <input type="checkbox" defaultChecked />
                    Пропорционально
                  </CheckLabel>
                </FormRow>
                <Anchors aria-label="Опорная точка">
                  {Array.from({ length: 9 }, (_, i) => (
                    <input key={i} type="radio" name="anchor" aria-label={`Точка ${i + 1}`} defaultChecked={i === 4} />
                  ))}
                </Anchors>
                <Rule />
                <FormRow $gap={8}>
                  <label htmlFor="copies">Копии:</label>
                  <Spin id="copies" value="0" w={90} h={22} />
                </FormRow>
                <Rule />
                <Apply>Применить</Apply>
              </Panel>
              <Tabs>
                <Tab $active>
                  <Art name="tabMove" size={17} />
                  <span>Преобразования</span>
                  <Shape w={9} h={9} d="M1 1l7 7M8 1L1 8" stroke="#6a8cc0" sw={2} />
                </Tab>
                <Tab>
                  <Art name="tabShape" />
                  <span>Формирование</span>
                </Tab>
              </Tabs>
            </DockerBody>
          </Docker>

          <Palette>
            <Dots />
            <RoundButton aria-label="Меню палитры"><Play /></RoundButton>
            <PaletteButton $plain aria-label="Пипетка"><Art name="eyedropOff" size={13} /></PaletteButton>
            <PaletteButton aria-label="Прокрутить вверх">
              <Shape w={9} h={6} d="M1 5l3.500-4L8 5" fill="none" stroke="#ccc9c4" sw={2} />
            </PaletteButton>
            <Swatch $w={18} $h={18} aria-label="Нет цвета"><Cross /></Swatch>
            {colors.map((c, i) => (
              <Swatch key={c} $w={18} $color={c} $selected={i === 0} aria-label={c} />
            ))}
            <PaletteButton aria-label="Прокрутить вниз">
              <Shape w={9} h={6} d="M1 1l3.500 4L8 1" fill="none" stroke="#444" sw={2} />
            </PaletteButton>
            <PaletteButton $plain aria-label="Развернуть палитру">
              <Shape w={7} h={9} d="M0 0h1v9H0zM7 0v9L2 4.500z" />
            </PaletteButton>
          </Palette>
        </Work>

        <Status>
          <StatusText>
            <Group $gap={14}>( 160,109; 224,441 )<Play /></Group>
            <Group $gap={7}>
              Цветовые профили документа: RGB: sRGB IEC61966-2.1; CMYK: ISO Coated v2 (ECI); Оттенки серого: Dot Gain 15%
              <Play />
            </Group>
          </StatusText>
          <StatusText>
            <Art name="proof" />
          </StatusText>
          <Fill>
            <Art name="bucket" />
            <Swatch $w={18} $h={18} aria-label="Цвет заливки"><Cross /></Swatch>
            <Art name="pen" />
            <Swatch $w={18} $h={18} $color="#161817" aria-label="Цвет абриса" />
          </Fill>
          <UserButton $flyout aria-label="Пользователь"><Art name="user" size={15} /></UserButton>
        </Status>
        <Taskbar><span /><span /><span /><span /><span /></Taskbar>
      </Window>
    </>
  );
}
